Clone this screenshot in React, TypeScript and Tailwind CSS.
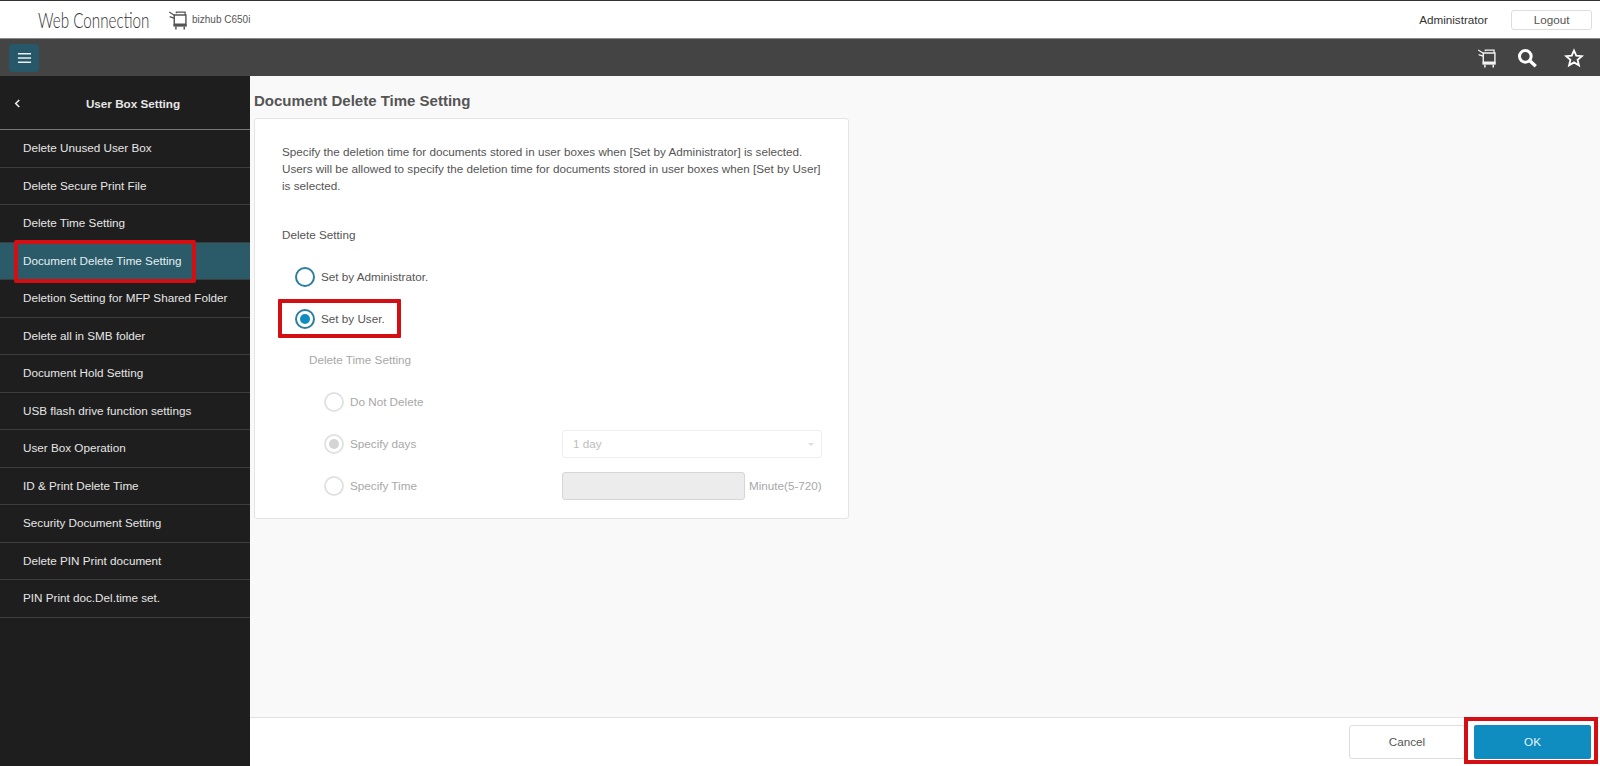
import React from 'react';

const menuItems = [
  'Delete Unused User Box',
  'Delete Secure Print File',
  'Delete Time Setting',
  'Document Delete Time Setting',
  'Deletion Setting for MFP Shared Folder',
  'Delete all in SMB folder',
  'Document Hold Setting',
  'USB flash drive function settings',
  'User Box Operation',
  'ID & Print Delete Time',
  'Security Document Setting',
  'Delete PIN Print document',
  'PIN Print doc.Del.time set.',
];

const MfpIcon: React.FC<{ color: string; className: string }> = ({ color, className }) => (
  <svg viewBox="0 0 24 24" className={className} fill="none" stroke={color}>
    <path d="M1.5 2.5l6.5 4M2 8l6 2M10 4V2.5h10.5V6" strokeWidth="1.5" />
    <path d="M7.5 6h14v11h-14z" strokeWidth="1.7" />
    <path d="M6.5 18.5h16" strokeWidth="3" />
    <path d="M9.5 20v3.5M19.5 20v3.5" strokeWidth="1.8" />
  </svg>
);

const Radio: React.FC<{ on?: boolean; disabled?: boolean }> = ({ on, disabled }) => (
  <span
    className={`flex h-5 w-5 shrink-0 items-center justify-center rounded-full border-2 bg-white ${
      disabled ? 'border-[#e2e2e2]' : 'border-[#2b7f9e]'
    }`}
  >
    {on && <span className={`h-[10px] w-[10px] rounded-full ${disabled ? 'bg-[#d4d4d4]' : 'bg-[#0f8cc0]'}`} />}
  </span>
);

const App: React.FC = () => {
  return (
    <div className="flex h-[766px] w-[1600px] flex-col overflow-hidden bg-white font-['Liberation_Sans',Arial,sans-serif] text-[11.7px]">
      <header className="flex h-[38px] shrink-0 items-center border-t border-[#333] bg-white pr-2">
        <span className="ml-[38px] w-[130px] origin-left scale-x-[0.725] whitespace-nowrap font-['Lato',sans-serif] text-[21px] font-light text-[#333]">
          Web Connection
        </span>
        <MfpIcon color="#555" className="h-[20px] w-[20px]" />
        <span className="ml-[4px] text-[10px] text-[#555]">bizhub C650i</span>
        <span className="ml-auto text-[#333]">Administrator</span>
        <button className="ml-[23px] h-[20px] w-[81px] rounded-[3px] border border-[#ddd] bg-white text-[#555]">
          Logout
        </button>
      </header>

      <div className="flex h-[38px] shrink-0 items-center border-t border-[#8a8a8a] bg-[#444444] pl-[9px] pr-[16px]">
        <button className="flex h-[28px] w-[30px] items-center justify-center rounded-[4px] bg-[#26586a]">
          <svg viewBox="0 0 16 12" className="h-[12px] w-[15px]" fill="none" stroke="#e8f0f2" strokeWidth="1.7">
            <path d="M1 1.5h14M1 6h14M1 10.5h14" />
          </svg>
        </button>
        <MfpIcon color="#f2f2f2" className="ml-auto h-[20px] w-[20px]" />
        <svg viewBox="0 0 24 24" className="ml-[20px] h-[20px] w-[20px]" fill="none" stroke="#fff">
          <circle cx="10" cy="10" r="7" strokeWidth="3.6" />
          <path d="M15 15l7.5 7" strokeWidth="4" />
        </svg>
        <svg viewBox="0 0 24 24" className="ml-[27px] h-[20px] w-[20px]" fill="none" stroke="#fff" strokeWidth="2.2">
          <path d="M12 3l2.7 6.2 6.8.6-5.2 4.4 1.6 6.6L12 17.3l-5.9 3.5 1.6-6.6-5.2-4.4 6.8-.6z" />
        </svg>
      </div>

      <div className="flex min-h-0 flex-1">
        <aside className="w-[250px] shrink-0 bg-[#1e1e1e] text-[#e6e6e6]">
          <div className="relative flex h-[54px] items-center justify-center border-b border-[#777] pl-[16px] pt-[2px]">
            <svg viewBox="0 0 8 10" className="absolute left-[14px] h-[9px] w-[7px]" fill="none" stroke="#eee" strokeWidth="1.8">
              <path d="M6 1L2 5l4 4" />
            </svg>
            <span className="font-bold">User Box Setting</span>
          </div>
          {menuItems.map((item) => {
            const active = item === 'Document Delete Time Setting';
            return (
              <div
                key={item}
                className={`relative flex h-[37.5px] items-center border-b border-[#3d3d3d] pl-[23px] ${
                  active ? 'bg-[#2b5a69] text-[#e3f0f3]' : ''
                }`}
              >
                {item}
                {active && (
                  <span className="absolute left-[14px] top-[-3px] h-[43px] w-[182px] rounded-[2px] border-[4px] border-[#d40f14]" />
                )}
              </div>
            );
          })}
        </aside>

        <div className="flex min-w-0 flex-1 flex-col">
          <main className="flex-1 bg-[#f9f9f9] pl-[4px] pt-[16px]">
            <h1 className="text-[15px] font-bold leading-[18px] text-[#555]">Document Delete Time Setting</h1>
            <section className="mt-[8px] h-[401px] w-[595px] rounded-[3px] border border-[#e4e4e4] bg-white pl-[27px] pr-[10px] pt-[24px] text-[#555]">
              <p className="leading-[17px]">
                Specify the deletion time for documents stored in user boxes when [Set by Administrator] is selected.
                <br />
                Users will be allowed to specify the deletion time for documents stored in user boxes when [Set by User]
                <br />
                is selected.
              </p>
              <p className="mt-[32px] leading-[17px]">Delete Setting</p>

              <div className="ml-[13px] mt-[24px] flex h-5 items-center gap-[6px]">
                <Radio />
                <span>Set by Administrator.</span>
              </div>
              <div className="relative ml-[13px] mt-[22px] flex h-5 items-center gap-[6px]">
                <Radio on />
                <span>Set by User.</span>
                <span className="absolute left-[-17px] top-[-10px] h-[39px] w-[123px] rounded-[1px] border-[4px] border-[#d40f14]" />
              </div>

              <div className="text-[#a8a8a8]">
                <p className="ml-[27px] mt-[22px] leading-[17px]">Delete Time Setting</p>
                <div className="ml-[42px] mt-[24px] flex h-5 items-center gap-[6px]">
                  <Radio disabled />
                  <span>Do Not Delete</span>
                </div>
                <div className="ml-[42px] mt-[18px] flex h-7 items-center">
                  <Radio on disabled />
                  <span className="ml-[6px] w-[212px]">Specify days</span>
                  <div className="flex h-7 w-[260px] items-center justify-between rounded-[3px] border border-[#eee] bg-white pl-[10px] pr-[7px] text-[#bdbdbd]">
                    1 day
                    <span className="h-0 w-0 border-x-[3px] border-t-[3px] border-x-transparent border-t-[#ddd]" />
                  </div>
                </div>
                <div className="ml-[42px] mt-[14px] flex h-7 items-center">
                  <Radio disabled />
                  <span className="ml-[6px] w-[212px]">Specify Time</span>
                  <div className="h-7 w-[183px] rounded-[3px] border border-[#d6d6d6] bg-[#ececec]" />
                  <span className="ml-[4px] whitespace-nowrap">Minute(5-720)</span>
                </div>
              </div>
            </section>
          </main>

          <footer className="flex h-[49px] shrink-0 items-center justify-end gap-[9px] border-t border-[#e2e2e2] bg-white pr-[9px]">
            <button className="h-[34px] w-[116px] rounded-[3px] border border-[#ddd] bg-white text-[#555]">Cancel</button>
            <div className="relative">
              <button className="block h-[34px] w-[117px] rounded-[2px] bg-[#0f8cc0] text-[#e8f5fb]">OK</button>
              <span className="absolute left-[-10px] top-[-8px] h-[47px] w-[134px] border-[4px] border-[#d40f14]" />
            </div>
          </footer>
        </div>
      </div>
    </div>
  );
};

export default App;
